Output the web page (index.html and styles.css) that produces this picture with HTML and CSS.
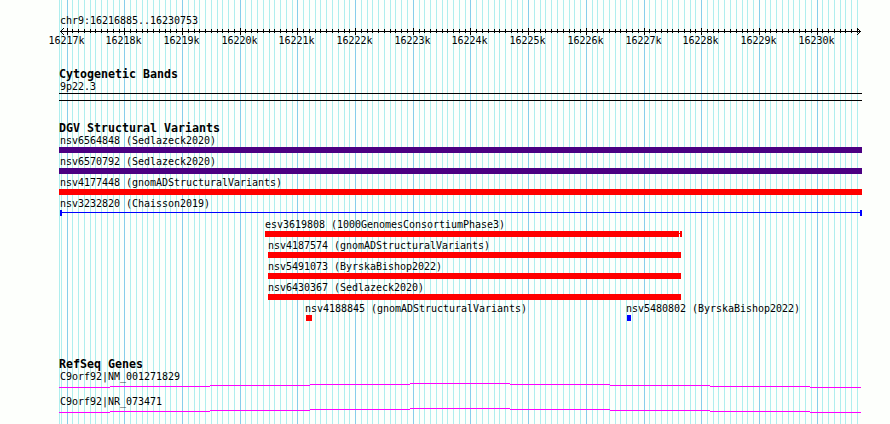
FILE: index.html
```
<!DOCTYPE html>
<html lang="en">
<head>
<meta charset="utf-8">
<title>chr9:16216885..16230753</title>
<link rel="stylesheet" href="styles.css">
</head>
<body>
<main class="browser">
  <svg class="grid" id="grid" width="890" height="424" shape-rendering="crispEdges" aria-hidden="true"></svg>
  <section class="overview">
    <div class="label">chr9:16216885..16230753</div>
    <svg class="ruler" id="ruler" width="890" height="22" shape-rendering="crispEdges"></svg>
  </section>
  <section class="track bands">
    <h2>Cytogenetic Bands</h2>
    <div class="label">9p22.3</div>
    <div class="band"></div>
  </section>
  <section class="track variants">
    <h2>DGV Structural Variants</h2>
    <div class="row"><div class="feature full"><div class="label">nsv6564848 (Sedlazeck2020)</div><div class="bar complex"></div></div></div>
    <div class="row"><div class="feature full"><div class="label">nsv6570792 (Sedlazeck2020)</div><div class="bar complex"></div></div></div>
    <div class="row"><div class="feature full"><div class="label">nsv4177448 (gnomADStructuralVariants)</div><div class="bar loss"></div></div></div>
    <div class="row"><div class="feature full"><div class="label">nsv3232820 (Chaisson2019)</div><div class="range"></div></div></div>
    <div class="row"><div class="feature esv"><div class="label">esv3619808 (1000GenomesConsortiumPhase3)</div><div class="ends"><div class="bar loss"></div><div class="link"></div><div class="bar loss cap"></div></div></div></div>
    <div class="row"><div class="feature mid"><div class="label">nsv4187574 (gnomADStructuralVariants)</div><div class="bar loss"></div></div></div>
    <div class="row"><div class="feature mid"><div class="label">nsv5491073 (ByrskaBishop2022)</div><div class="bar loss"></div></div></div>
    <div class="row"><div class="feature mid"><div class="label">nsv6430367 (Sedlazeck2020)</div><div class="bar loss"></div></div></div>
    <div class="row"><div class="feature small-loss"><div class="label">nsv4188845 (gnomADStructuralVariants)</div><div class="bar loss"></div></div><div class="feature small-gain"><div class="label">nsv5480802 (ByrskaBishop2022)</div><div class="bar gain"></div></div></div>
  </section>
  <section class="track genes">
    <h2>RefSeq Genes</h2>
    <div class="gene"><div class="label">C9orf92|NM_001271829</div><svg class="intron" width="802" height="5" shape-rendering="crispEdges"><path d="M0 4.5H51M51 3.5H151M151 2.5H251M251 1.5H351M351 .5H451M451 1.5H551M551 2.5H651M651 3.5H751M751 4.5H802"/></svg></div>
    <div class="gene"><div class="label">C9orf92|NR_073471</div><svg class="intron" width="802" height="5" shape-rendering="crispEdges"><path d="M0 4.5H51M51 3.5H151M151 2.5H251M251 1.5H351M351 .5H451M451 1.5H551M551 2.5H651M651 3.5H751M751 4.5H802"/></svg></div>
  </section>
</main>
<script src="scale.js"></script>
</body>
</html>
```
FILE: styles.css
```
* { box-sizing: border-box; }
body { margin: 0; background: #fdfffc; color: #000; }
.browser {
  position: relative;
  width: 890px;
  height: 424px;
  overflow: hidden;
  font: 10px/12px "DejaVu Sans Mono", monospace;
  letter-spacing: -0.02px;
}
.grid { position: absolute; inset: 0; }
.minor { fill: #afeeee; }
.major { fill: #87ceeb; }
.overview, .track { position: relative; }
.label { height: 12px; padding-left: 1px; white-space: pre; }
.overview { padding-top: 15px; height: 68px; }
.overview .label { padding-left: 60px; }
.ruler { display: block; }
.ruler text { font: 10px "DejaVu Sans Mono", monospace; text-anchor: middle; }
.arrow { fill: none; stroke: #000; }
.track { padding-left: 59px; }
h2 { margin: 0; height: 13px; font: bold 11.63px/13px "DejaVu Sans Mono", monospace; letter-spacing: 0; }
.bands { height: 54px; }
.band { width: 803px; height: 8px; border: solid #000; border-width: 1px 0; }
.variants { height: 236px; }
.row { display: flex; height: 21px; }
.feature { flex: none; }
.bar { height: 6px; }
.complex { background: #4b0082; }
.loss { background: #f00; }
.gain { background: #00f; }
.full { width: 803px; }
.range { width: 802px; height: 6px; margin-left: 1px; border: solid #00f; border-width: 0 2px; background: linear-gradient(#00f, #00f) 0 2px / 100% 1px no-repeat; }
.esv { width: 417px; margin-left: 206px; }
.esv .label { padding-left: 0; }
.ends { display: flex; }
.ends .bar { width: 414px; }
.ends .link { width: 1px; height: 1px; margin-top: 2px; background: #f00; }
.ends .cap { width: 2px; }
.mid { width: 413px; margin-left: 209px; }
.mid .label { padding-left: 0; }
.small-loss { width: 6px; margin-left: 247px; }
.small-gain { width: 4px; margin-left: 315px; }
.small-loss .label, .small-gain .label { padding-left: 0; margin-left: -1px; }
.gene { height: 25px; }
.intron { display: block; }
.intron path { stroke: #f0f; }
```
FILE: scale.js
```
const start = 16216885, end = 16230753, left = 60, span = 800;
const NS = 'http://www.w3.org/2000/svg';
const grid = document.getElementById('grid');
const ruler = document.getElementById('ruler');

function add(parent, tag, attrs, text) {
  const el = document.createElementNS(NS, tag);
  for (const key in attrs) el.setAttribute(key, attrs[key]);
  if (text) el.textContent = text;
  parent.appendChild(el);
}

add(grid, 'rect', { class: 'minor', x: 59, y: 0, width: 1, height: 424 });
add(ruler, 'path', { class: 'arrow', d: 'M60 4.5H861' });
add(ruler, 'path', { class: 'arrow', d: 'M63.5 1v1M62.5 2v1M61.5 3v1M61.5 5v1M62.5 6v1M63.5 7v1M857.5 1v1M858.5 2v1M859.5 3v1M859.5 5v1M858.5 6v1M857.5 7v1' });
for (let bp = 16216900; bp <= end; bp += 100) {
  const major = bp % 1000 === 0;
  const x = Math.round(left + (bp - start) / (end - start) * span);
  add(grid, 'rect', { class: major ? 'major' : 'minor', x, y: 0, width: 1, height: 424 });
  if (x > 63) add(ruler, 'rect', { x, y: major ? 1 : 2, width: 1, height: major ? 7 : 4 });
  if (major) add(ruler, 'text', { x: x - 0.5, y: 17 }, bp / 1000 + 'k');
}
```
